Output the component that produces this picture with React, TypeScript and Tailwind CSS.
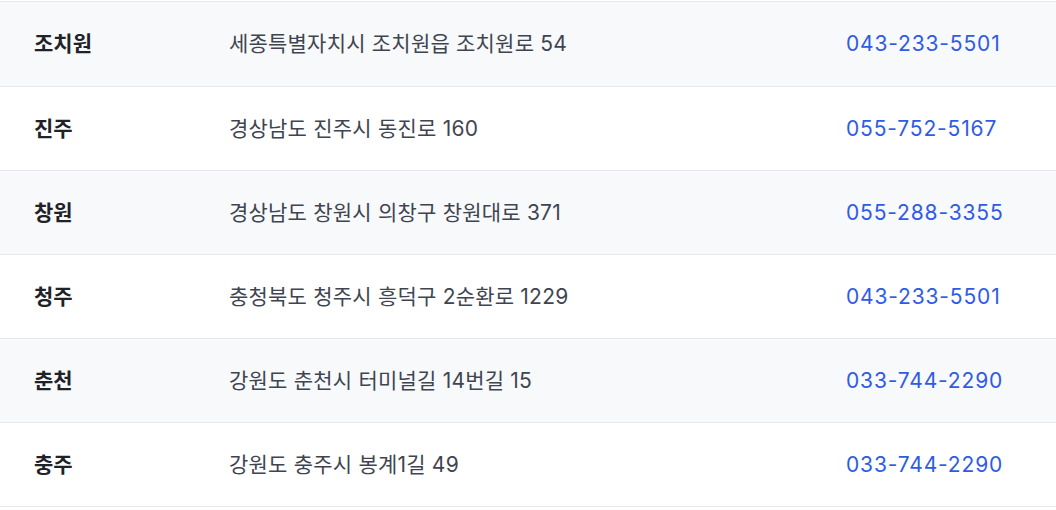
import React from 'react';

const branches = [
  { name: '조치원', address: '세종특별자치시 조치원읍 조치원로 54', phone: '043-233-5501' },
  { name: '진주', address: '경상남도 진주시 동진로 160', phone: '055-752-5167' },
  { name: '창원', address: '경상남도 창원시 의창구 창원대로 371', phone: '055-288-3355' },
  { name: '청주', address: '충청북도 청주시 흥덕구 2순환로 1229', phone: '043-233-5501' },
  { name: '춘천', address: '강원도 춘천시 터미널길 14번길 15', phone: '033-744-2290' },
  { name: '충주', address: '강원도 충주시 봉계1길 49', phone: '033-744-2290' },
];

export default function App() {
  return (
    <div
      className="w-[1056px] h-[510px] bg-white pt-px overflow-hidden"
      style={{ fontFamily: 'Inter, "Noto Sans CJK KR", sans-serif' }}
    >
      <div className="border-t border-[#e5e7eb]">
        {branches.map((b, i) => (
          <div
            key={b.name}
            className={`grid grid-cols-[197px_617px_1fr] items-center border-b border-[#e5e7eb] ${
              i === 0 ? 'h-[85px]' : 'h-[84px]'
            } ${i % 2 === 0 ? 'bg-[#f8f9fb]' : 'bg-white'}`}
          >
            <div className="pl-[34px] text-[21px] font-bold text-[#1f2328]">{b.name}</div>
            <div className="pl-8 text-[21px] tracking-[0.01em] text-[#3f4550]">{b.address}</div>
            <div className="pl-8 text-[21px] tracking-[0.04em] text-[#2f5be6]">{b.phone}</div>
          </div>
        ))}
      </div>
    </div>
  );
}
